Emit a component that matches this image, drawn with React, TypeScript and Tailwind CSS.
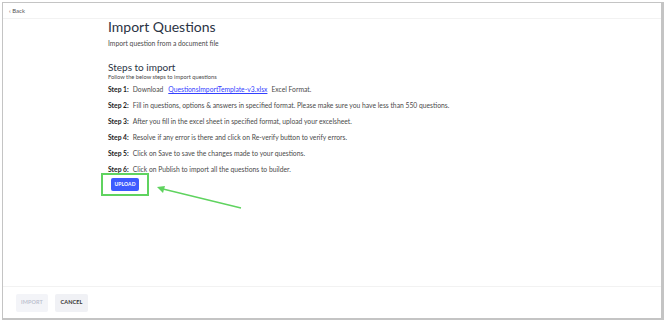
export default function App() {
    const steps = [
        { label: 'Step 2:', text: 'Fill in questions, options & answers in specified format. Please make sure you have less than 550 questions.' },
        { label: 'Step 3:', text: 'After you fill in the excel sheet in specified format, upload your excelsheet.' },
        { label: 'Step 4:', text: 'Resolve if any error is there and click on Re-verify button to verify errors.' },
        { label: 'Step 5:', text: 'Click on Save to save the changes made to your questions.' },
        { label: 'Step 6:', text: 'Click on Publish to import all the questions to builder.' },
    ]

    return (
        <div className="w-[670px] h-[322px] bg-white p-[2px] pr-[6px] pb-[2px] font-['Lato',sans-serif]">
            <div className="relative h-full border border-[#c4c4c4] border-r-[3px] border-b-[2px] flex flex-col">
                {/* Header */}
                <div className="h-[16px] border-b border-[#f2f2f2] flex items-center px-[6px]">
                    <span className="text-[6px] text-[#555555] leading-none">‹ Back</span>
                </div>

                {/* Body */}
                <div className="flex-1 pl-[105px]">
                    <h1 className="text-[14px] text-[#2b3445] leading-[16px]">Import Questions</h1>
                    <p className="text-[6.75px] text-[#4a4a4a] mt-[4px] leading-[8px]">Import question from a document file</p>

                    <h2 className="text-[10px] text-[#2b3445] mt-[13px] leading-[14px]">Steps to import</h2>
                    <p className="text-[5.75px] text-[#4a4a4a] leading-[6px]">Follow the below steps to import questions</p>

                    <div className="mt-[5px] flex flex-col gap-[8px] text-[6.75px] text-[#4a4a4a] leading-[8px]">
                        <div>
                            <span className="font-bold text-[#222222]">Step 1:</span>
                            <span className="ml-[4px]">Download</span>
                            <a className="ml-[5px] text-[#3340ff] underline">QuestionsImportTemplate-v3.xlsx</a>
                            <span className="ml-[4px]">Excel Format.</span>
                        </div>
                        {steps.map((s) => (
                            <div key={s.label}>
                                <span className="font-bold text-[#222222]">{s.label}</span>
                                <span className="ml-[4px]">{s.text}</span>
                            </div>
                        ))}
                    </div>

                    <div className="mt-0 ml-[-7px] w-[48px] h-[23px] border-2 border-[#5fd35f] flex items-center justify-center">
                        <button className="w-[28px] h-[13px] rounded-[2px] bg-[#3d5afe] text-white text-[5px] font-bold tracking-wide">UPLOAD</button>
                    </div>
                </div>

                {/* Arrow */}
                <svg className="absolute left-[150px] top-[180px]" width="95" height="30" viewBox="0 0 95 30">
                    <line x1="88" y1="25" x2="10" y2="6" stroke="#5fd35f" strokeWidth="1.3" />
                    <polygon points="4,4 12,3 10,10" fill="#5fd35f" />
                </svg>

                {/* Footer */}
                <div className="h-[32px] border-t border-[#f2f2f2] flex items-center gap-[7px] px-[13px]">
                    <button className="h-[18px] w-[32px] rounded-[2px] bg-[#f3f4f8] text-[#b7bccb] text-[5.5px] font-semibold tracking-wide">IMPORT</button>
                    <button className="h-[18px] w-[33px] rounded-[2px] bg-[#f0f1f5] text-[#333333] text-[5.5px] font-bold tracking-wide">CANCEL</button>
                </div>
            </div>
        </div>
    )
}
